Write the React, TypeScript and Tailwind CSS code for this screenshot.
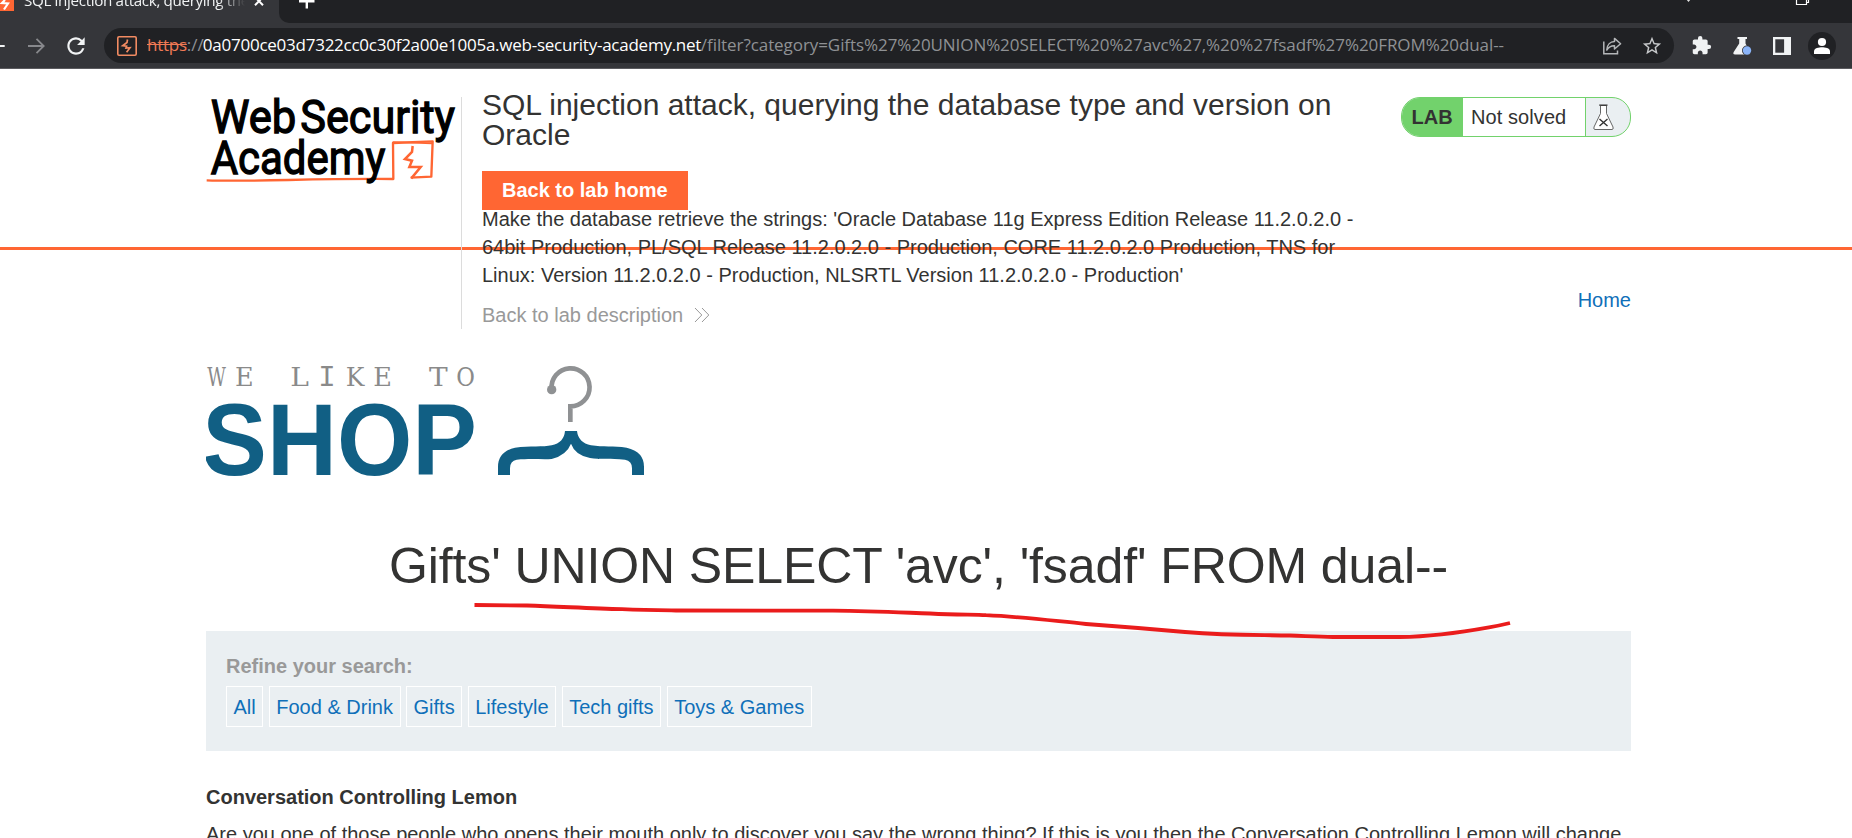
import React from "react";
import { MdExtension, MdRefresh, MdStarBorder } from "react-icons/md";

const categories = ["All", "Food & Drink", "Gifts", "Lifestyle", "Tech gifts", "Toys & Games"];

function TabStrip() {
  return (
    <div className="flex h-[23px] items-start overflow-hidden bg-[#35363a]">
      <svg className="h-[23px] w-[14px] shrink-0" viewBox="0 0 14 23">
        <rect x="-6" y="-8" width="20" height="19" fill="#ff6633" />
        <path d="M5 0 L2 3 L8 3.5 L4 9.5" fill="none" stroke="#fff" strokeWidth="2.2" />
      </svg>
      <div className="ml-[10px] h-[23px] w-[221px] overflow-hidden whitespace-nowrap [mask-image:linear-gradient(to_right,black_88%,transparent)]">
        <p className="-mt-[10px] text-[15.2px] leading-[21px] tracking-[-0.35px] text-[#f1f3f4]">
          SQL injection attack, querying the database
        </p>
      </div>
      <svg className="ml-[8px] h-[10px] w-[12px] shrink-0" viewBox="0 0 12 10">
        <path d="M2 -3 L10 5.3 M10 -3 L2 5.3" stroke="#fff" strokeWidth="2" />
      </svg>
      <div className="ml-[14px] h-[23px] flex-1 rounded-bl-[10px] bg-[#202124]">
        <div className="flex justify-between">
          <svg className="ml-[19px] h-[12px] w-[18px]" viewBox="0 0 18 12">
            <path d="M1 1.2 H16.5 M8.8 -4 V8.5" stroke="#fff" strokeWidth="2.4" />
          </svg>
          <svg className="mr-[42px] h-[12px] w-[124px]" viewBox="0 0 124 12">
            <path d="M0 -2 L2.5 1 L5 -2" fill="none" stroke="#ddd" strokeWidth="1.3" />
            <path d="M110.5 -4 V4.5 H120.5 V-4 M121 2.5 H122.5 V-4" fill="none" stroke="#fff" strokeWidth="1.2" />
          </svg>
        </div>
      </div>
    </div>
  );
}

function Toolbar() {
  return (
    <div className="flex h-[46px] items-center border-b border-[#5b5b5f] bg-[#35363a]">
      <svg className="h-[24px] w-[48px] shrink-0" viewBox="0 0 48 24">
        <path d="M-4 12 H4.7" stroke="#f1f3f4" strokeWidth="2" />
        <path d="M28 12 H43.5 M36.5 4.8 L43.7 12 L36.5 19.2" fill="none" stroke="#87888c" strokeWidth="1.8" />
      </svg>
      <MdRefresh className="ml-[15px] mr-[1px] shrink-0 text-[#f1f3f4]" size={26} />
      <div className="ml-[14px] flex h-[35px] w-[1570px] shrink-0 items-center rounded-full bg-[#202124]">
        <svg className="ml-[13px] h-[20px] w-[20px] shrink-0" viewBox="0 0 20 20">
          <rect x="0.8" y="0.8" width="18.4" height="18.4" rx="1.2" fill="none" stroke="#f28b62" strokeWidth="1.6" />
          <path d="M10.5 3.5 L10 6.5 L5.7 9.7 L9.6 10.2 L9 12 L13 11.7 L9.6 16.3" fill="none" stroke="#f28b62" strokeWidth="1.7" />
        </svg>
        <div className="mb-[2px] ml-[10px] flex h-[24px] w-[1357px] whitespace-nowrap text-[17px] leading-[24px]">
          <span className="w-[40px] tracking-[-0.25px] text-[#f07a55] line-through">https</span>
          <span className="w-[16px] text-[#8f9194]">://</span>
          <span className="w-[498px] tracking-[-0.25px] text-white">0a0700ce03d7322cc0c30f2a00e1005a.web-security-academy.net</span>
          <span className="tracking-[-0.075px] text-[#8f9194]">
            /filter?category=Gifts%27%20UNION%20SELECT%20%27avc%27,%20%27fsadf%27%20FROM%20dual--
          </span>
        </div>
        <svg className="ml-[98px] h-[18px] w-[20px] shrink-0" viewBox="0 0 20 18" fill="none" stroke="#b4b6b8" strokeWidth="1.5">
          <path d="M1.8 4.5 V16.7 H15.5 V13.5" />
          <path d="M4.8 13 C5 7.5 8.5 4.8 12.5 4.6 V1.4 L18.6 6.8 L12.5 12 V8.8 C9 8.7 6.5 10.2 4.8 13 Z" strokeLinejoin="round" />
        </svg>
        <MdStarBorder className="ml-[19px] shrink-0 text-[#c6c8ca]" size={22} />
      </div>
      <MdExtension className="ml-[17px] shrink-0 text-[#f1f3f4]" size={21} />
      <svg className="ml-[20px] h-[20px] w-[20px] shrink-0" viewBox="0 0 20 20">
        <path d="M5.5 1 H15 V3 H13.5 V7.5 L18 16 Q19 18.5 16.5 18.5 H3 Q0.6 18.5 1.7 16 L7.2 7.5 V3 H5.5 Z" fill="#f1f3f4" />
        <circle cx="15" cy="14.5" r="5" fill="#35363a" />
        <circle cx="15" cy="14.5" r="4.2" fill="#8ab4f8" />
      </svg>
      <svg className="ml-[20px] h-[20px] w-[20px] shrink-0" viewBox="0 0 20 20">
        <rect x="1" y="1" width="18" height="18" fill="#f1f3f4" />
        <rect x="3.3" y="3.3" width="8.8" height="13.4" fill="#35363a" />
      </svg>
      <svg className="ml-[16px] h-[28px] w-[28px] shrink-0" viewBox="0 0 28 28">
        <circle cx="14" cy="14" r="14" fill="#202124" />
        <circle cx="14" cy="10" r="4.1" fill="#fff" />
        <path d="M6 22 V19.5 C6 16 11 15.3 14 15.3 S22 16 22 19.5 V22 Z" fill="#fff" />
      </svg>
    </div>
  );
}

function AcademyLogo() {
  return (
    <svg className="h-[90px] w-[255px] shrink-0" viewBox="48 51 765 270">
      <path d="M50 301 C200 306 350 295 610 297 L609 189 L728 184 L724 290 L662 293" fill="none" stroke="#ff6633" strokeWidth="7" strokeLinejoin="round" />
      <path d="M608 186 L726 190" stroke="#ff6633" strokeWidth="5" />
      <path d="M668 198 L666 216 L645 237 L666 242 L658 261 L692 261 L664 295" fill="none" stroke="#ff6633" strokeWidth="7.5" />
      <g fontFamily="Roboto, sans-serif" fontWeight="400" fontSize="141" fill="#000" stroke="#000" strokeWidth="4">
        <text x="62" y="158" textLength="257" lengthAdjust="spacingAndGlyphs">Web</text>
        <text x="331" y="158" textLength="464" lengthAdjust="spacingAndGlyphs">Security</text>
        <text x="62" y="281" textLength="524" lengthAdjust="spacingAndGlyphs">Academy</text>
      </g>
    </svg>
  );
}

const slabLetters = [
  { ch: "W", x: 52, w: 56 },
  { ch: "E", x: 135, w: 56 },
  { ch: "L", x: 301, w: 56 },
  { ch: "K", x: 467, w: 56 },
  { ch: "E", x: 550, w: 56 },
  { ch: "T", x: 717, w: 56 },
  { ch: "O", x: 799, w: 56 },
];

function ShopLogo() {
  return (
    <svg className="mt-[46px] block h-[125px] w-[450px]" viewBox="48 60 1350 375">
      <g fontFamily="DejaVu Serif, serif" fontSize="78" fill="#8a8a8a">
        {slabLetters.map((l) => (
          <text key={l.x} x={l.x} y="138" textLength={l.w} lengthAdjust="spacingAndGlyphs">
            {l.ch}
          </text>
        ))}
        <text x="411" y="138" textAnchor="middle" fontFamily="Liberation Mono, monospace" fontSize="87">
          I
        </text>
      </g>
      <text x="37" y="406" textLength="824" lengthAdjust="spacingAndGlyphs" fontFamily="Liberation Sans, sans-serif" fontWeight="700" fontSize="305" fill="#115f84">
        SHOP
      </text>
      <circle cx="1085" cy="149" r="14" fill="#8f9193" />
      <path d="M1085 148 A57 57 0 1 1 1141 199 V246" fill="none" stroke="#8f9193" strokeWidth="14" />
      <path
        d="M924 405 V380 Q924 335 975 323 C1020 317 1060 322 1085 316 Q1122 308 1125 273 H1161 Q1165 308 1203 316 C1240 322 1270 317 1310 323 Q1362 335 1362 380 V405 H1326 V385 Q1326 362 1305 359 C1260 355 1230 359 1200 354 Q1155 345 1143 311 Q1130 345 1085 357 C1055 359 1025 355 980 359 Q960 362 960 385 V405 Z"
        fill="#115f84"
      />
    </svg>
  );
}

function LabStatus() {
  return (
    <div className="flex h-[40px] w-[230px] shrink-0 overflow-hidden rounded-[19px] border border-[#72d26c] bg-[#eaeff2]">
      <span className="w-[61px] bg-[#72d26c] pl-[9.5px] text-[20px] font-bold leading-[39px]">LAB</span>
      <span className="w-[123px] border-r border-[#72d26c] bg-white pl-[8px] text-[20px] leading-[38px] tracking-[0.08px]">Not solved</span>
      <svg className="ml-[7px] mt-[6px] h-[27px] w-[21px]" viewBox="0 0 21 27">
        <path d="M7.5 1.5 V9.5 L1 23 Q0.3 25.5 2 25.5 H19 Q20.7 25.5 20 23 L13.5 9.5 V1.5 Z" fill="#fff" stroke="#555" strokeWidth="0.9" />
        <path d="M6.2 1.2 H14.5" stroke="#333" strokeWidth="1.3" />
        <path d="M6.5 15 L14.5 22 M14.5 15 L6.5 22" stroke="#333" strokeWidth="1.4" />
      </svg>
    </div>
  );
}

function LabHeader() {
  return (
    <header className="h-[181px] border-b-[3px] border-[#ff6633] pl-[206px] pt-[28px]">
      <div className="flex w-[1425px] items-start">
        <AcademyLogo />
        <div className="h-[232px] w-[940px] shrink-0 border-l border-[#dcdcdc] pl-[20px]">
          <h2 className="-mt-[7px] text-[30px] leading-[30px]">
            SQL injection attack, querying the database type and version on
            <br />
            Oracle
          </h2>
          <a className="mt-[21px] block h-[39px] w-[206px] bg-[#ff6633] pl-[20px] text-[20px] font-bold leading-[39px] text-white">
            Back to lab home
          </a>
          <p className="-mt-[5px] text-[20px] leading-[28px]">
            Make the database retrieve the strings: 'Oracle Database 11g Express Edition Release 11.2.0.2.0 -
            <br />
            64bit Production, PL/SQL Release 11.2.0.2.0 - Production, CORE 11.2.0.2.0 Production, TNS for
            <br />
            Linux: Version 11.2.0.2.0 - Production, NLSRTL Version 11.2.0.2.0 - Production'
          </p>
          <a className="mt-[12px] flex items-center text-[20px] leading-[28px] text-[#999]">
            Back to lab description
            <svg className="ml-[11px] h-[16px] w-[16px]" viewBox="0 0 16 16" fill="none" stroke="#999" strokeWidth="1">
              <path d="M1 1 L7.8 8 L1 15 M8 1 L14.8 8 L8 15" />
            </svg>
          </a>
        </div>
        <LabStatus />
      </div>
    </header>
  );
}

export default function App() {
  return (
    <div className="h-[838px] w-[1852px] overflow-hidden bg-white">
      <div className="font-['Open_Sans',sans-serif]">
        <TabStrip />
        <Toolbar />
      </div>
      <div className="font-['Liberation_Sans',sans-serif] text-[#333332]">
        <LabHeader />
        <main className="ml-[206px] w-[1425px] pt-[36px]">
          <nav className="flex justify-end text-[20px] leading-[28px] text-[#0f6fb9]">
            <a>Home</a>
          </nav>
          <ShopLogo />
          <h1 className="mt-[56px] text-center text-[50px] leading-[50px] tracking-[-0.1px]">Gifts' UNION SELECT 'avc', 'fsadf' FROM dual--</h1>
          <section className="relative mt-[40px] h-[120px] bg-[#eaeff2] pl-[20px] pt-[21px] text-[20px] leading-[28px]">
            <p className="font-bold text-[#999]">Refine your search:</p>
            <div className="mt-[6px] flex gap-[5.56px] text-[#0f6fb9]">
              {categories.map((name) => (
                <a key={name} className="h-[41px] border border-white px-[6.5px] pt-[6px]">
                  {name}
                </a>
              ))}
            </div>
            <svg className="absolute -top-[31px] left-[264px] h-[41px] w-[1046px]" viewBox="470 600 1046 41">
              <path
                d="M474.5 605 L527 605.5 C560 606.5 590 608.5 622 609.2 C645 610.2 660 610.3 676 610.5 L833 610.6 C870 611 890 612 930 613.5 C960 615 975 614.3 986 615.2 C1025 617 1050 620.5 1086 624 L1138 628 L1185 632 C1229 635.5 1250 634.8 1290 635.5 C1310 636.3 1320 637 1333 637 H1400 C1430 636.5 1460 632.5 1489 627.3 Q1500 625.5 1510 623"
                fill="none"
                stroke="#ea1c1c"
                strokeWidth="3.8"
                strokeLinejoin="round"
              />
            </svg>
          </section>
          <h3 className="mt-[32px] text-[20px] font-bold leading-[28px]">Conversation Controlling Lemon</h3>
          <p className="mt-[9px] whitespace-nowrap text-[20px] leading-[28px]">
            Are you one of those people who opens their mouth only to discover you say the wrong thing? If this is you then the Conversation Controlling Lemon will change
          </p>
        </main>
      </div>
    </div>
  );
}
